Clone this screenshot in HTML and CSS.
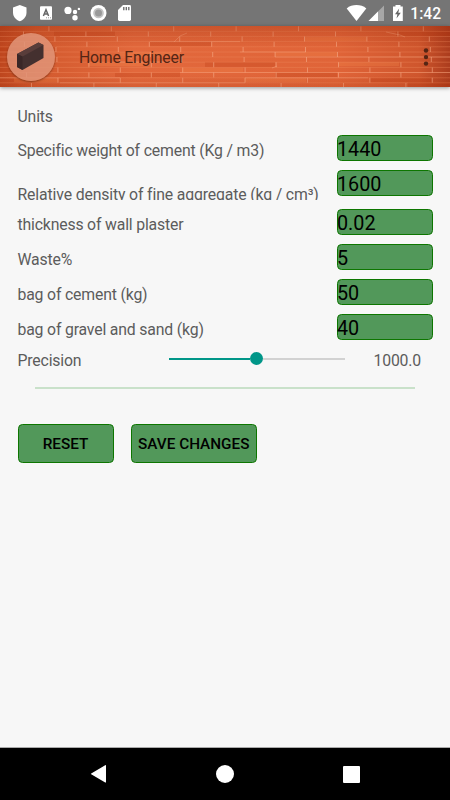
FILE: index.html
```html
<!DOCTYPE html>
<html lang="en">
<head>
    <meta charset="UTF-8">
    <meta name="viewport" content="width=device-width, initial-scale=1.0">
    <title>Home Engineer</title>
    <link rel="stylesheet" href="styles.css">
</head>
<body>
    <div class="status-bar">
        <svg class="status-icons" width="140" height="26" viewBox="0 0 140 26" fill="#fff">
            <path d="M19.8 5L26.5 7.5V12.5C26.5 16.5 23.5 20 19.8 21.2C16 20 13 16.5 13 12.5V7.5Z"/>
            <rect x="40" y="6.3" width="12" height="13.4" rx="1"/>
            <path d="M43.4 16L46 9.8L48.6 16M44.3 14H47.7" fill="none" stroke="#666" stroke-width="1.5"/>
            <path d="M46 17.8H51" stroke="#999" stroke-dasharray="1 1"/>
            <circle cx="68" cy="10.4" r="3.6"/>
            <circle cx="75" cy="12" r="2.2"/>
            <circle cx="78.9" cy="8.9" r="1.2"/>
            <circle cx="75" cy="17.8" r="2.7"/>
            <circle cx="98.5" cy="13" r="8"/>
            <circle cx="98.5" cy="13" r="5.3" fill="#c4c4c4"/>
            <circle cx="98.5" cy="13" r="3.5" fill="#999"/>
            <path d="M123 5H129.6Q131 5 131 6.4V19.6Q131 21 129.6 21H119.4Q118 21 118 19.6V10Z"/>
            <path d="M123.8 7V10.2M126.3 7V10.2M128.8 7V10.2" stroke="#666" stroke-width="1.3"/>
        </svg>
        <div class="status-right">
            <svg width="60" height="26" viewBox="0 0 60 26" fill="#fff">
                <path d="M1.7 8.4C7 4 16 4 21.3 8.4L11.5 21Z"/>
                <path d="M39 5.5V21H23.5Z" fill="#a7a7a7"/>
                <path d="M33 11.5V21H23.5Z"/>
                <path d="M50.5 5H55.5V6.5H57.8V21H48V6.5H50.5Z"/>
                <path d="M54.2 8.5L50 14.3H52.4L51.5 18.5L55.8 12.8H53.3Z" fill="#666"/>
            </svg>
            <span class="clock">1:42</span>
        </div>
    </div>

    <div class="toolbar">
        <svg class="bricks" width="450" height="61" viewBox="0 0 450 61">
            <defs>
                <linearGradient id="wall" x1="0" x2="1" y1="0" y2="0">
                    <stop offset="0" stop-color="#be461e"/>
                    <stop offset="0.08" stop-color="#d35a2e"/>
                    <stop offset="0.3" stop-color="#e2683c"/>
                    <stop offset="0.75" stop-color="#e06438"/>
                    <stop offset="0.93" stop-color="#cf562d"/>
                    <stop offset="1" stop-color="#ab3c1d"/>
                </linearGradient>
                <linearGradient id="shade" x1="0" x2="0" y1="0" y2="1">
                    <stop offset="0" stop-color="#96280a" stop-opacity="0.3"/>
                    <stop offset="0.35" stop-color="#96280a" stop-opacity="0"/>
                    <stop offset="0.8" stop-color="#96280a" stop-opacity="0"/>
                    <stop offset="1" stop-color="#96280a" stop-opacity="0.15"/>
                </linearGradient>
            </defs>
            <rect width="450" height="61" fill="url(#wall)"/>
            <!-- darker and lighter bricks -->
            <g fill="#b8360f" opacity="0.25">
                <rect x="54" y="5" width="61" height="5"/>
                <rect x="396" y="5" width="54" height="5"/>
                <rect x="150" y="15" width="61" height="5"/>
                <rect x="115" y="47" width="65" height="4"/>
                <rect x="275" y="46" width="62" height="5"/>
                <rect x="370" y="52" width="61" height="4"/>
                <rect x="0" y="20" width="56" height="5"/>
                <rect x="205" y="36" width="70" height="5"/>
                <rect x="408" y="56" width="42" height="5"/>
            </g>
            <g fill="#f78c4e" opacity="0.25">
                <rect x="304" y="11" width="63" height="4"/>
                <rect x="120" y="26" width="61" height="4"/>
                <rect x="244" y="52" width="62" height="4"/>
                <rect x="88" y="36" width="61" height="4"/>
                <rect x="275" y="26" width="62" height="4"/>
                <rect x="338" y="36" width="61" height="4"/>
                <rect x="182" y="42" width="61" height="4"/>
                <rect x="14" y="52" width="45" height="4"/>
            </g>
            <!-- mortar courses -->
            <path d="M0 5.4H450M0 10.5H450M0 15.6H450M0 20.8H450M0 26H450M0 31H450M0 36.2H450M0 41.4H450M0 46.5H450M0 51.8H450M0 56.8H450" stroke="#f08c60" stroke-width="0.8" opacity="0.45"/>
            <path d="M60 10.5H115M150 15.6H240M240 26H306M275 31H450M120 36H180M180 46.5H450M0 51.8H120M245 51.8H368M60 56.8H245" stroke="#ffb794" stroke-width="0.8" opacity="0.4"/>
            <g stroke="#f8ad89" stroke-width="5" stroke-dasharray="1 61.4" opacity="0.6">
                <path d="M-14 2.8H450"/>
                <path d="M23 8H450"/>
                <path d="M-8 13H450"/>
                <path d="M24 18.2H450"/>
                <path d="M-7 23.4H450"/>
                <path d="M25 28.5H450"/>
                <path d="M-6 33.6H450"/>
                <path d="M26 38.8H450"/>
                <path d="M-5 44H450"/>
                <path d="M26 49.1H450"/>
                <path d="M-5 54.2H450"/>
                <path d="M31 59.4H450"/>
            </g>
            <path d="M174 16L180 10L187 7M126 30L132 33M386 6L400 9L405 11M272 42L277 40" fill="none" stroke="#f9a983" stroke-width="0.7" opacity="0.6"/>
            <rect width="450" height="61" fill="url(#shade)"/>
        </svg>
        <div class="logo">
            <svg width="48" height="48" viewBox="0 0 48 48">
                <path d="M10 21L31.5 9.5L36.5 12V25L15.5 37L10 34Z" fill="#44302f"/>
                <path d="M10 21L31.5 9.5L36.5 12L15.5 23.5Z" fill="#593d3a"/>
                <path d="M10 21L15.5 23.5V37L10 34Z" fill="#3a2727"/>
            </svg>
        </div>
        <h1 class="title">Home Engineer</h1>
        <svg class="menu" width="8" height="20" viewBox="0 0 8 20" fill="#542514">
            <circle cx="4" cy="3.5" r="2.2"/>
            <circle cx="4" cy="10.1" r="2.2"/>
            <circle cx="4" cy="16.6" r="2.2"/>
        </svg>
    </div>

    <div class="content">
        <h2 class="section-title">Units</h2>
        <div class="row">
            <label class="label">Specific weight of cement (Kg / m3)</label>
            <div class="field">1440</div>
        </div>
        <div class="row row-clipped">
            <label class="label">Relative density of fine aggregate (kg / cm³)</label>
            <div class="field">1600</div>
        </div>
        <div class="row">
            <label class="label">thickness of wall plaster</label>
            <div class="field">0.02</div>
        </div>
        <div class="row">
            <label class="label">Waste%</label>
            <div class="field">5</div>
        </div>
        <div class="row">
            <label class="label">bag of cement (kg)</label>
            <div class="field">50</div>
        </div>
        <div class="row">
            <label class="label">bag of gravel and sand (kg)</label>
            <div class="field">40</div>
        </div>
        <div class="precision">
            <label class="precision-label">Precision</label>
            <div class="slider">
                <div class="slider-fill"></div>
                <div class="slider-thumb"></div>
                <div class="slider-rest"></div>
            </div>
            <span class="precision-value">1000.0</span>
        </div>
        <div class="divider"></div>
        <div class="buttons">
            <button class="btn btn-reset">RESET</button>
            <button class="btn btn-save">SAVE CHANGES</button>
        </div>
    </div>

    <div class="nav-bar">
        <svg width="18" height="20" viewBox="0 0 18 20" fill="#fff"><path d="M1.2 10.2Q0.5 9.8 1.2 9.4L15.2 1.2Q16 0.8 16 1.6V18Q16 18.8 15.2 18.4Z"/></svg>
        <svg width="18" height="18" viewBox="0 0 18 18" fill="#fff"><circle cx="9" cy="9" r="9"/></svg>
        <svg width="17" height="17" viewBox="0 0 17 17" fill="#fff"><rect width="17" height="17" rx="1"/></svg>
    </div>
</body>
</html>
```
FILE: styles.css
```css
* {
    box-sizing: border-box;
}

body {
    font-family: Roboto, sans-serif;
    background-color: #f7f7f7;
    display: flex;
    flex-direction: column;
    height: 800px;
    margin: 0;
    color: #5c5c5c;
    overflow: hidden;
}

svg {
    display: block;
    flex: none;
}

.status-bar {
    display: flex;
    justify-content: space-between;
    height: 26px;
    background-color: #757575;
}

.status-right {
    display: flex;
    padding-right: 9px;
}

.status-right svg {
    margin-right: 1px;
}

.clock {
    width: 35px;
    text-align: right;
    color: #ffffff;
    font-size: 15.6px;
    font-weight: 500;
    line-height: 28px;
}

.toolbar {
    position: relative;
    display: flex;
    align-items: center;
    height: 61px;
    padding: 0 20px 0 7px;
    box-shadow: 0 1px 4px rgba(0, 0, 0, 0.4);
}

.bricks {
    position: absolute;
    left: 0;
    top: 0;
}

.logo {
    position: relative;
    width: 48px;
    height: 48px;
    border-radius: 50%;
    background-color: rgba(225, 148, 120, 0.85);
    box-shadow: 0 1px 2px rgba(60, 20, 0, 0.5);
}

.title {
    position: relative;
    flex: 1;
    margin: 2px 0 0 24px;
    font-size: 15.8px;
    font-weight: 400;
    letter-spacing: -0.22px;
    color: #542514;
}

.menu {
    position: relative;
}

.content {
    flex: 1;
    padding: 20px 17.5px 0;
}

.section-title {
    margin: 0 0 9px;
    font-size: 15.8px;
    font-weight: 400;
    letter-spacing: -0.17px;
    line-height: 19px;
}

.row {
    display: flex;
    justify-content: space-between;
    align-items: flex-start;
    height: 26px;
    margin-bottom: 9px;
}

.row-clipped {
    height: 30px;
}

.label {
    font-size: 15.8px;
    letter-spacing: -0.17px;
    line-height: 19px;
    margin-top: 6px;
    white-space: nowrap;
}

.row-clipped .label {
    height: 15px;
    margin-top: 15px;
    letter-spacing: -0.14px;
    overflow: hidden;
}

.field {
    width: 95.5px;
    height: 26px;
    padding-top: 1px;
    border: 1px solid #0d7600;
    border-radius: 4.5px;
    background-color: #52985a;
    color: #000000;
    font-size: 19.8px;
    line-height: 26px;
    text-indent: -1px;
}

.precision {
    display: flex;
    align-items: center;
    height: 20px;
    margin-top: 10px;
    font-size: 15.8px;
    letter-spacing: -0.17px;
}

.precision-label {
    width: 151px;
}

.slider {
    display: flex;
    align-items: center;
    width: 176px;
    margin-top: -3px;
}

.slider-fill {
    width: 81.5px;
    height: 2px;
    background-color: #009688;
}

.slider-thumb {
    width: 13px;
    height: 13px;
    border-radius: 50%;
    background-color: #009688;
}

.slider-rest {
    flex: 1;
    height: 2px;
    background-color: #d2d2d2;
}

.precision-value {
    margin-left: 29px;
}

.divider {
    height: 2px;
    margin: 17px 17.5px 0;
    background-color: #c9e1ca;
}

.buttons {
    display: flex;
    gap: 17.5px;
    margin-top: 35px;
}

.btn {
    height: 39px;
    padding: 1px 0 0;
    border: 1px solid #0d7600;
    border-radius: 4.5px;
    background-color: #52985a;
    color: #000000;
    font-family: Roboto, sans-serif;
    font-size: 15.3px;
    font-weight: 500;
    white-space: nowrap;
}

.btn-reset {
    width: 96px;
}

.btn-save {
    width: 125.5px;
}

.nav-bar {
    display: flex;
    justify-content: space-between;
    align-items: center;
    height: 53px;
    padding: 0 90.5px 0 89.5px;
    border-top: 1px solid #aaaaaa;
    background-color: #000000;
}
```
